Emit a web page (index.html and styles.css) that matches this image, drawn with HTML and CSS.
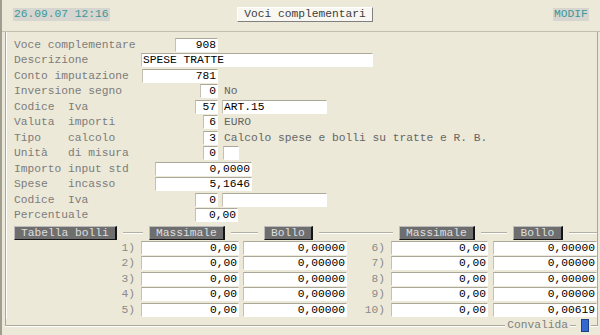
FILE: index.html
```html
<!DOCTYPE html>
<html lang="it">
<head>
    <meta charset="UTF-8">
    <meta name="viewport" content="width=device-width, initial-scale=1.0">
    <title>Voci complementari</title>
    <link rel="stylesheet" href="styles.css">
</head>
<body>
    <div class="window">
        <div class="topbar">
            <span class="stamp">26.09.07 12:16</span>
            <span class="title">Voci complementari</span>
            <span class="mode">MODIF</span>
        </div>

        <div class="panel">
            <!-- testata voce -->
            <div class="row"><span class="lbl">Voce complementare</span><span class="fld num f-voce">908</span></div>
            <div class="row"><span class="lbl">Descrizione</span><span class="fld f-desc">SPESE TRATTE</span></div>
            <div class="row"><span class="lbl">Conto imputazione</span><span class="fld num f-conto">781</span></div>
            <div class="row"><span class="lbl">Inversione segno</span><span class="fld num f-flag">0</span><span class="note">No</span></div>
            <div class="row"><span class="lbl">Codice  Iva</span><span class="fld num f-iva">57</span><span class="fld f-ivadesc">ART.15</span></div>
            <div class="row"><span class="lbl">Valuta  importi</span><span class="fld num f-digit">6</span><span class="note">EURO</span></div>
            <div class="row"><span class="lbl">Tipo    calcolo</span><span class="fld num f-digit">3</span><span class="note">Calcolo spese e bolli su tratte e R. B.</span></div>
            <div class="row"><span class="lbl">Unità   di misura</span><span class="fld num f-digit">0</span><span class="fld f-unit"></span></div>
            <div class="row"><span class="lbl">Importo input std</span><span class="fld num f-amount">0,0000</span></div>
            <div class="row"><span class="lbl">Spese   incasso</span><span class="fld num f-amount">5,1646</span></div>
            <div class="row"><span class="lbl">Codice  Iva</span><span class="fld num f-iva">0</span><span class="fld f-ivadesc"></span></div>
            <div class="row"><span class="lbl">Percentuale</span><span class="fld num f-perc">0,00</span></div>

            <!-- tabella bolli -->
            <div class="bar">
                <span class="btn btn-tab">Tabella bolli</span>
                <span class="seg s1"></span>
                <span class="btn btn-max">Massimale</span>
                <span class="seg s2"></span>
                <span class="btn btn-bol">Bollo</span>
                <span class="seg s3"></span>
                <span class="btn btn-max">Massimale</span>
                <span class="seg s4"></span>
                <span class="btn btn-bol2">Bollo</span>
                <span class="seg s5"></span>
            </div>

            <div class="trow"><span class="idx">1)</span><span class="fld num c-max">0,00</span><span class="fld num c-bol">0,00000</span><span class="idx idx2">6)</span><span class="fld num c-max2">0,00</span><span class="fld num c-bol2">0,00000</span></div>
            <div class="trow"><span class="idx">2)</span><span class="fld num c-max">0,00</span><span class="fld num c-bol">0,00000</span><span class="idx idx2">7)</span><span class="fld num c-max2">0,00</span><span class="fld num c-bol2">0,00000</span></div>
            <div class="trow"><span class="idx">3)</span><span class="fld num c-max">0,00</span><span class="fld num c-bol">0,00000</span><span class="idx idx2">8)</span><span class="fld num c-max2">0,00</span><span class="fld num c-bol2">0,00000</span></div>
            <div class="trow"><span class="idx">4)</span><span class="fld num c-max">0,00</span><span class="fld num c-bol">0,00000</span><span class="idx idx2">9)</span><span class="fld num c-max2">0,00</span><span class="fld num c-bol2">0,00000</span></div>
            <div class="trow"><span class="idx">5)</span><span class="fld num c-max">0,00</span><span class="fld num c-bol">0,00000</span><span class="idx idx2">10)</span><span class="fld num c-max2">0,00</span><span class="fld num c-bol2">0,00619</span></div>
        </div>

        <div class="footer">
            <span class="edge edge-left"></span>
            <span class="confirm">Convalida</span>
            <span class="edge edge-mid"></span>
            <span class="ok"></span>
            <span class="edge edge-right"></span>
        </div>
    </div>
</body>
</html>
```

FILE: styles.css
```css
*, *::after, *::before {
    box-sizing: border-box;
}

body {
    margin: 0;
    background: #ece9d8;
    font-family: "Liberation Mono", "Courier New", monospace;
    font-size: 11.25px;
    color: #000;
}

.window {
    width: 600px;
    height: 335px;
    border-left: 2px solid #a09d91;
    overflow: hidden;
}

/* barra superiore */
.topbar {
    height: 32px;
    display: flex;
    align-items: flex-start;
    padding: 7px 0 0 11px;
    border-bottom: 1px solid #c2bfb0;
}

.stamp,
.mode {
    margin-top: 1px;
    height: 13px;
    line-height: 13px;
    background: #d6d5d0;
    color: #3b9898;
}

.stamp {
    width: 97px;
    padding-left: 1px;
}

.title {
    margin-left: 127px;
    width: 136px;
    height: 15px;
    line-height: 13px;
    text-align: center;
    background: #f8f7f2;
    border: 1px solid;
    border-color: #fff #808080 #808080 #fff;
    color: #3d3d3d;
}

.mode {
    margin-left: auto;
    margin-right: 11px;
    width: 36px;
    text-align: center;
}

/* pannello dati */
.panel {
    margin: 0 2px 0 3px;
    padding: 5px 0 1px 8px;
    border-left: 1px solid #aca899;
    border-right: 1px solid #aca899;
    box-shadow: inset 1px 0 #fff;
}

.row,
.trow {
    display: flex;
    align-items: center;
    height: 15.5px;
}

.lbl {
    width: 127px;
    white-space: pre;
    color: #7c7c7c;
}

.note {
    margin-left: 6px;
    white-space: pre;
    color: #666;
}

.fld {
    height: 14px;
    line-height: 12px;
    padding: 0 1px;
    background: #fff;
    border: 1px solid;
    border-color: #aca899 #fff #fff #c4c1b4;
    white-space: pre;
    overflow: hidden;
    color: #000;
}

.num {
    text-align: right;
}

.f-voce { margin-left: 34px; width: 43px; }
.f-desc { width: 232px; }
.f-conto { margin-left: 1px; width: 76px; }
.f-flag { margin-left: 59px; width: 18px; }
.f-iva { margin-left: 54px; width: 23px; }
.f-digit { margin-left: 62px; width: 15px; }
.f-ivadesc { margin-left: 4px; width: 105px; }
.f-unit { margin-left: 5px; width: 16px; }
.f-amount { margin-left: 14px; width: 97px; }
.f-perc { margin-left: 54px; width: 43px; }

/* tabella bolli */
.bar {
    display: flex;
    align-items: center;
    gap: 6px;
    height: 14px;
    margin: 3px 0 0;
}

.btn {
    height: 14px;
    line-height: 12px;
    text-align: center;
    background: #6e6e6e;
    color: #dedede;
    border: 1px solid;
    border-color: #bcbcbc #151515 #151515 #bcbcbc;
    border-right-width: 2px;
}

.btn-tab { width: 103px; }
.btn-max { width: 76px; }
.btn-bol { width: 49px; }
.btn-bol2 { width: 50px; }

.seg {
    height: 2px;
    border-top: 1px solid #b3b0a2;
    border-bottom: 1px solid #fff;
}

.s1 { width: 20px; }
.s2 { width: 27px; }
.s3 { width: 74px; }
.s4 { width: 26px; }
.s5 { flex: 1; }

.idx {
    width: 121px;
    text-align: right;
    white-space: pre;
    color: #8a8a8a;
}

.idx2 { width: 38px; }

.c-max { margin-left: 6px; width: 98px; }
.c-bol { margin-left: 4px; width: 104px; }
.c-max2 { margin-left: 6px; width: 97px; }
.c-bol2 { margin-left: 5px; width: 104px; }

/* piede con convalida */
.footer {
    display: flex;
    height: 13px;
    margin: 0 2px 0 3px;
}

.edge {
    height: 7px;
    border-bottom: 1px solid #aca899;
    box-shadow: 0 1px #fff;
}

.edge-left {
    flex: 1;
    border-left: 1px solid #aca899;
}

.edge-mid { width: 6px; }

.edge-right {
    width: 7px;
    margin-left: 2px;
    border-right: 1px solid #aca899;
}

.confirm {
    margin: 0 2px;
    line-height: 13px;
    color: #808080;
}

.ok {
    width: 8px;
    height: 13px;
    margin-left: 5px;
    background: #3268d0;
    border: 1px solid #1d3f86;
}
```
